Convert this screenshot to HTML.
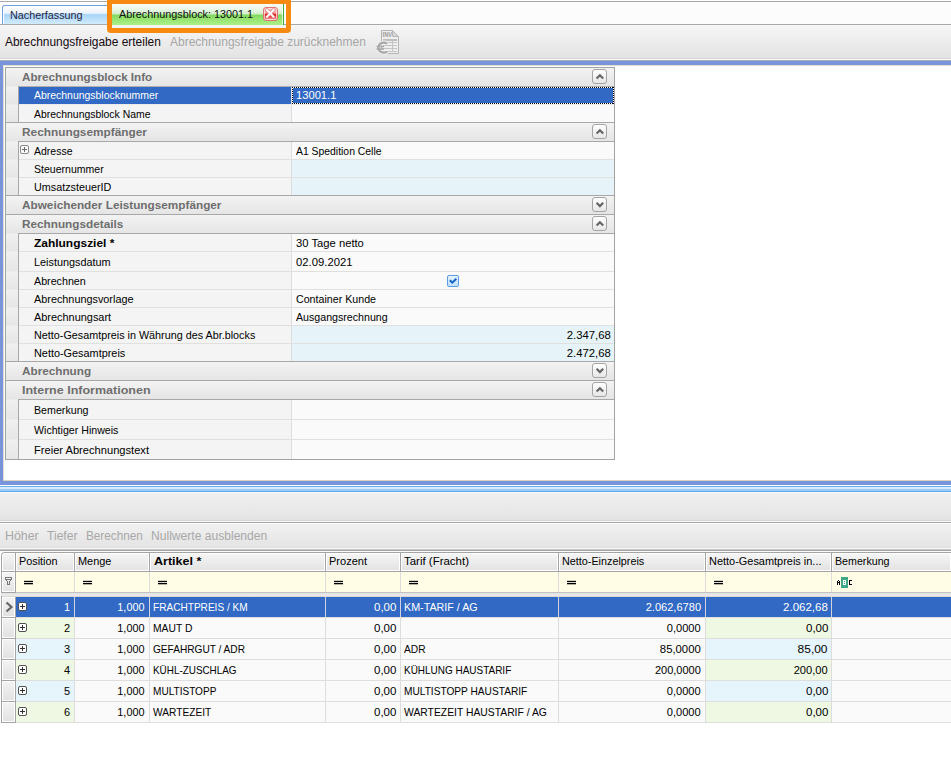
<!DOCTYPE html>
<html><head><meta charset="utf-8"><style>
html,body{margin:0;padding:0}
body{width:951px;height:766px;position:relative;overflow:hidden;background:#fff;font-family:"Liberation Sans",sans-serif}
.a{position:absolute}
.t{white-space:nowrap}
</style></head><body>
<div class="a" style="left:0px;top:1px;width:951px;height:1px;background:#a9a9a9"></div>
<div class="a" style="left:0px;top:2px;width:951px;height:22px;background:#fcfcfc"></div>
<div class="a" style="left:0px;top:24px;width:951px;height:1px;background:#a9a9a9"></div>
<div class="a" style="left:2px;top:5px;width:109px;height:19px;box-sizing:border-box;border:1px solid #6fa0e0;border-bottom:none;border-radius:3px 3px 0 0;box-shadow:inset 1px 1px 0 #fff;background:linear-gradient(to bottom,#ffffff 0%,#eaf3fd 40%,#a8d4f8 48%,#c2e2fb 80%,#d2ecfd 100%)"></div>
<div class="a t" style="left:10px;top:8.19px;line-height:14px;font-size:11px;color:#26263e;font-weight:normal;transform:scaleX(0.9809);transform-origin:left center;">Nacherfassung</div>
<div class="a" style="left:112px;top:4px;width:172px;height:21px;box-sizing:border-box;border-right:1px solid #3cac3c;background:linear-gradient(to bottom,#f8fcf6 0%,#e6f5e2 30%,#d2eeca 47%,#80d95e 53%,#8fe06a 65%,#a4ec80 90%,#acf088 100%)"></div>
<div class="a" style="left:112px;top:25px;width:174px;height:3px;background:#f4f4f4"></div>
<div class="a t" style="left:119px;top:7.19px;line-height:14px;font-size:11px;color:#101010;font-weight:normal;transform:scaleX(0.9829);transform-origin:left center;">Abrechnungsblock: 13001.1</div>
<div class="a" style="left:263px;top:7px;width:15px;height:14px;box-sizing:border-box;border:1px solid #e07272;border-radius:3px;box-shadow:inset 0 0 0 1px rgba(255,235,235,0.75);background:linear-gradient(to bottom,#fbd2d2 0%,#f6a4a4 42%,#e61c1c 55%,#ec4444 72%,#f9b8b8 100%)"><svg width="13" height="12" style="position:absolute;left:0;top:0"><path d="M3 2 L9.5 8.8 M9.5 2 L3 8.8" stroke="#d84848" stroke-width="3.6" stroke-linecap="square" opacity="0.55"/><path d="M3 2 L9.5 8.8 M9.5 2 L3 8.8" stroke="#fff" stroke-width="2.1" stroke-linecap="square"/></svg></div>
<div class="a" style="left:282px;top:5px;width:1px;height:19px;background:rgba(255,255,255,0.7)"></div>
<div class="a" style="left:0px;top:25px;width:951px;height:33px;background:linear-gradient(to bottom,#f6f6f6,#e3e3e3)"></div>
<div class="a" style="left:112px;top:25px;width:174px;height:3px;background:#f4f4f4"></div>
<div class="a" style="left:0px;top:58px;width:951px;height:1px;background:#d4d4d4"></div>
<div class="a" style="left:0px;top:59px;width:951px;height:1px;background:#fafafa"></div>
<div class="a" style="left:0px;top:60px;width:951px;height:1px;background:#a8acbc"></div>
<div class="a t" style="left:5px;top:34.84px;line-height:14px;font-size:12px;color:#140a10;font-weight:normal;transform:scaleX(0.9938);transform-origin:left center;">Abrechnungsfreigabe erteilen</div>
<div class="a t" style="left:170px;top:34.84px;line-height:14px;font-size:12px;color:#a6a6a6;font-weight:normal;transform:scaleX(0.9983);transform-origin:left center;">Abrechnungsfreigabe zurücknehmen</div>
<svg class="a" style="left:370px;top:26px" width="36" height="32" viewBox="0 0 36 32">
<path d="M11.5 4.5 H22.5 L28.5 10.5 V27.5 H11.5 Z" fill="#efefef" stroke="#b4b4b4" stroke-width="1"/>
<path d="M22.5 4.5 V10.5 H28.5 Z" fill="#d6d6d6" stroke="#b8b8b8" stroke-width="1"/>
<text x="12.6" y="11.2" font-family="Liberation Sans" font-size="7" font-weight="bold" fill="#989898" textLength="9.6" lengthAdjust="spacingAndGlyphs">INV</text>
<rect x="13" y="13" width="14" height="2" fill="#bdbdbd"/>
<path d="M13 16.5 H27 M13 19.5 H27 M13 22.5 H27 M13 25.5 H27 M22.5 13 V26" stroke="#c4c4c4" stroke-width="1"/>
<path d="M17.2 17.6 C14.5 15.8 9 16.2 8.3 21.6 C8.2 26 13.2 27.6 17.2 25.8" fill="none" stroke="#f4f4f4" stroke-width="4"/>
<path d="M17.2 17.6 C14.5 15.8 9 16.2 8.3 21.6 C8.2 26 13.2 27.6 17.2 25.8" fill="none" stroke="#a8a8a8" stroke-width="2.2"/>
<path d="M6.5 20.5 H14 M6.5 23 H14" stroke="#a8a8a8" stroke-width="1.3"/>
</svg>
<div class="a" style="left:107px;top:-1px;width:184px;height:34px;box-sizing:border-box;border:5px solid #f88a12;border-radius:1px 1px 4px 4px"></div>
<div class="a" style="left:0px;top:61px;width:951px;height:4px;background:#7895dc"></div>
<div class="a" style="left:0px;top:61px;width:3px;height:424px;background:#7895dc"></div>
<div class="a" style="left:0px;top:481px;width:951px;height:4px;background:#7895dc"></div>
<div class="a" style="left:3px;top:65px;width:948px;height:416px;background:#ffffff"></div>
<div class="a" style="left:3px;top:65px;width:948px;height:1px;background:#e2ddd2"></div>
<div class="a" style="left:3px;top:65px;width:1px;height:416px;background:#e2ddd2"></div>
<div class="a" style="left:3px;top:480px;width:948px;height:1px;background:#d8d2c4"></div>
<div class="a" style="left:5px;top:67px;width:610px;height:393px;box-sizing:border-box;border:1px solid #a3a3a3;background:#f4f4f4"></div>
<div class="a" style="left:6px;top:68px;width:608px;height:18px;background:linear-gradient(to bottom,#f3f3f3,#e5e5e5)"></div>
<div class="a t" style="left:22px;top:70.19px;line-height:14px;font-size:11px;color:#6e6e6e;font-weight:bold;transform:scaleX(1.0601);transform-origin:left center;">Abrechnungsblock Info</div>
<div class="a" style="left:592px;top:69px;width:15px;height:15px;box-sizing:border-box;border:1px solid #a4a4a4;border-radius:3px;background:linear-gradient(to bottom,#ffffff,#e6e6e6)"><svg width="13" height="13" style="position:absolute;left:0;top:0"><path d="M3.6 8.5 L6.9 5.2 L10.2 8.5" fill="none" stroke="#666" stroke-width="2.2"/></svg></div>
<div class="a" style="left:18px;top:86px;width:596px;height:1px;background:#b0b0b0"></div>
<div class="a" style="left:6px;top:86px;width:12px;height:1px;background:linear-gradient(to bottom,#f0f0f0,#e6e6e6)"></div>
<div class="a" style="left:18px;top:86px;width:1px;height:1px;background:#a8a8a8"></div>
<div class="a" style="left:6px;top:87px;width:12px;height:17px;background:linear-gradient(to bottom,#f0f0f0,#e6e6e6)"></div>
<div class="a" style="left:18px;top:87px;width:1px;height:17px;background:#a8a8a8"></div>
<div class="a" style="left:19px;top:87px;width:272px;height:17px;background:#3169c4"></div>
<div class="a" style="left:291px;top:87px;width:1px;height:17px;background:#dcdcdc"></div>
<div class="a" style="left:292px;top:87px;width:322px;height:17px;background:#3169c4"></div>
<div class="a" style="left:292px;top:87px;width:322px;height:1px;background:repeating-linear-gradient(to right,#000 0 1px,#fff 1px 2px)"></div>
<div class="a" style="left:292px;top:103px;width:322px;height:1px;background:repeating-linear-gradient(to right,#000 0 1px,#fff 1px 2px)"></div>
<div class="a" style="left:292px;top:87px;width:1px;height:17px;background:repeating-linear-gradient(to bottom,#000 0 1px,#fff 1px 2px)"></div>
<div class="a" style="left:613px;top:87px;width:1px;height:17px;background:repeating-linear-gradient(to bottom,#000 0 1px,#fff 1px 2px)"></div>
<div class="a t" style="left:34px;top:88.19px;line-height:14px;font-size:11px;color:#ffffff;font-weight:normal;transform:scaleX(0.9491);transform-origin:left center;">Abrechnungsblocknummer</div>
<div class="a t" style="left:296px;top:88.19px;line-height:14px;font-size:11px;color:#ffffff;font-weight:normal;transform:scaleX(1.0159);transform-origin:left center;">13001.1</div>
<div class="a" style="left:6px;top:104px;width:12px;height:1px;background:linear-gradient(to bottom,#f0f0f0,#e6e6e6)"></div>
<div class="a" style="left:18px;top:104px;width:1px;height:1px;background:#a8a8a8"></div>
<div class="a" style="left:19px;top:104px;width:595px;height:1px;background:#eeeae6"></div>
<div class="a" style="left:6px;top:105px;width:12px;height:17px;background:linear-gradient(to bottom,#f0f0f0,#e6e6e6)"></div>
<div class="a" style="left:18px;top:105px;width:1px;height:17px;background:#a8a8a8"></div>
<div class="a" style="left:19px;top:105px;width:272px;height:17px;background:#f4f4f4"></div>
<div class="a" style="left:291px;top:105px;width:1px;height:17px;background:#dcdcdc"></div>
<div class="a" style="left:292px;top:105px;width:322px;height:17px;background:#fafafa"></div>
<div class="a t" style="left:34px;top:106.69px;line-height:14px;font-size:11px;color:#000;font-weight:normal;transform:scaleX(0.9477);transform-origin:left center;">Abrechnungsblock Name</div>
<div class="a" style="left:6px;top:122px;width:608px;height:1px;background:#a8a8a8"></div>
<div class="a" style="left:6px;top:123px;width:608px;height:18px;background:linear-gradient(to bottom,#f3f3f3,#e5e5e5)"></div>
<div class="a t" style="left:22px;top:125.19px;line-height:14px;font-size:11px;color:#6e6e6e;font-weight:bold;transform:scaleX(1.0762);transform-origin:left center;">Rechnungsempfänger</div>
<div class="a" style="left:592px;top:124px;width:15px;height:15px;box-sizing:border-box;border:1px solid #a4a4a4;border-radius:3px;background:linear-gradient(to bottom,#ffffff,#e6e6e6)"><svg width="13" height="13" style="position:absolute;left:0;top:0"><path d="M3.6 8.5 L6.9 5.2 L10.2 8.5" fill="none" stroke="#666" stroke-width="2.2"/></svg></div>
<div class="a" style="left:18px;top:141px;width:596px;height:1px;background:#a8a8a8"></div>
<div class="a" style="left:6px;top:141px;width:12px;height:1px;background:linear-gradient(to bottom,#f0f0f0,#e6e6e6)"></div>
<div class="a" style="left:18px;top:141px;width:1px;height:1px;background:#a8a8a8"></div>
<div class="a" style="left:6px;top:142px;width:12px;height:17px;background:linear-gradient(to bottom,#f0f0f0,#e6e6e6)"></div>
<div class="a" style="left:18px;top:142px;width:1px;height:17px;background:#a8a8a8"></div>
<div class="a" style="left:19px;top:142px;width:272px;height:17px;background:#f4f4f4"></div>
<div class="a" style="left:291px;top:142px;width:1px;height:17px;background:#dcdcdc"></div>
<div class="a" style="left:292px;top:142px;width:322px;height:17px;background:#fafafa"></div>
<div class="a t" style="left:34px;top:143.69px;line-height:14px;font-size:11px;color:#000;font-weight:normal;transform:scaleX(0.9536);transform-origin:left center;">Adresse</div>
<div class="a t" style="left:296px;top:143.69px;line-height:14px;font-size:11px;color:#000;font-weight:normal;transform:scaleX(0.9444);transform-origin:left center;">A1 Spedition Celle</div>
<div class="a" style="left:20px;top:145px;width:9px;height:9px;box-sizing:border-box;border:1px solid #8a8a8a;border-radius:2px;background:#fafafa"><div class="a" style="left:1px;top:3px;width:5px;height:1px;background:#6a6a6a"></div><div class="a" style="left:3px;top:1px;width:1px;height:5px;background:#6a6a6a"></div></div>
<div class="a" style="left:6px;top:159px;width:12px;height:1px;background:linear-gradient(to bottom,#f0f0f0,#e6e6e6)"></div>
<div class="a" style="left:18px;top:159px;width:1px;height:1px;background:#a8a8a8"></div>
<div class="a" style="left:19px;top:159px;width:595px;height:1px;background:#e0e0e0"></div>
<div class="a" style="left:6px;top:160px;width:12px;height:17px;background:linear-gradient(to bottom,#f0f0f0,#e6e6e6)"></div>
<div class="a" style="left:18px;top:160px;width:1px;height:17px;background:#a8a8a8"></div>
<div class="a" style="left:19px;top:160px;width:272px;height:17px;background:#f4f4f4"></div>
<div class="a" style="left:291px;top:160px;width:1px;height:17px;background:#dcdcdc"></div>
<div class="a" style="left:292px;top:160px;width:322px;height:17px;background:#e6f4fa"></div>
<div class="a t" style="left:34px;top:161.69px;line-height:14px;font-size:11px;color:#000;font-weight:normal;transform:scaleX(0.9573);transform-origin:left center;">Steuernummer</div>
<div class="a" style="left:6px;top:177px;width:12px;height:1px;background:linear-gradient(to bottom,#f0f0f0,#e6e6e6)"></div>
<div class="a" style="left:18px;top:177px;width:1px;height:1px;background:#a8a8a8"></div>
<div class="a" style="left:19px;top:177px;width:595px;height:1px;background:#e0e0e0"></div>
<div class="a" style="left:6px;top:178px;width:12px;height:17px;background:linear-gradient(to bottom,#f0f0f0,#e6e6e6)"></div>
<div class="a" style="left:18px;top:178px;width:1px;height:17px;background:#a8a8a8"></div>
<div class="a" style="left:19px;top:178px;width:272px;height:17px;background:#f4f4f4"></div>
<div class="a" style="left:291px;top:178px;width:1px;height:17px;background:#dcdcdc"></div>
<div class="a" style="left:292px;top:178px;width:322px;height:17px;background:#e6f4fa"></div>
<div class="a t" style="left:34px;top:179.69px;line-height:14px;font-size:11px;color:#000;font-weight:normal;transform:scaleX(0.9807);transform-origin:left center;">UmsatzsteuerID</div>
<div class="a" style="left:6px;top:195px;width:608px;height:1px;background:#a8a8a8"></div>
<div class="a" style="left:6px;top:196px;width:608px;height:18px;background:linear-gradient(to bottom,#f3f3f3,#e5e5e5)"></div>
<div class="a t" style="left:22px;top:198.19px;line-height:14px;font-size:11px;color:#6e6e6e;font-weight:bold;transform:scaleX(1.0698);transform-origin:left center;">Abweichender Leistungsempfänger</div>
<div class="a" style="left:592px;top:197px;width:15px;height:15px;box-sizing:border-box;border:1px solid #a4a4a4;border-radius:3px;background:linear-gradient(to bottom,#ffffff,#e6e6e6)"><svg width="13" height="13" style="position:absolute;left:0;top:0"><path d="M3.6 4.8 L6.9 8.1 L10.2 4.8" fill="none" stroke="#666" stroke-width="2.2"/></svg></div>
<div class="a" style="left:6px;top:214px;width:608px;height:1px;background:#a8a8a8"></div>
<div class="a" style="left:6px;top:215px;width:608px;height:18px;background:linear-gradient(to bottom,#f3f3f3,#e5e5e5)"></div>
<div class="a t" style="left:22px;top:217.19px;line-height:14px;font-size:11px;color:#6e6e6e;font-weight:bold;transform:scaleX(1.0689);transform-origin:left center;">Rechnungsdetails</div>
<div class="a" style="left:592px;top:216px;width:15px;height:15px;box-sizing:border-box;border:1px solid #a4a4a4;border-radius:3px;background:linear-gradient(to bottom,#ffffff,#e6e6e6)"><svg width="13" height="13" style="position:absolute;left:0;top:0"><path d="M3.6 8.5 L6.9 5.2 L10.2 8.5" fill="none" stroke="#666" stroke-width="2.2"/></svg></div>
<div class="a" style="left:18px;top:233px;width:596px;height:1px;background:#a8a8a8"></div>
<div class="a" style="left:6px;top:233px;width:12px;height:1px;background:linear-gradient(to bottom,#f0f0f0,#e6e6e6)"></div>
<div class="a" style="left:18px;top:233px;width:1px;height:1px;background:#a8a8a8"></div>
<div class="a" style="left:6px;top:234px;width:12px;height:17px;background:linear-gradient(to bottom,#f0f0f0,#e6e6e6)"></div>
<div class="a" style="left:18px;top:234px;width:1px;height:17px;background:#a8a8a8"></div>
<div class="a" style="left:19px;top:234px;width:272px;height:17px;background:#f4f4f4"></div>
<div class="a" style="left:291px;top:234px;width:1px;height:17px;background:#dcdcdc"></div>
<div class="a" style="left:292px;top:234px;width:322px;height:17px;background:#fafafa"></div>
<div class="a t" style="left:34px;top:235.69px;line-height:14px;font-size:11px;color:#000;font-weight:bold;transform:scaleX(1.0867);transform-origin:left center;">Zahlungsziel *</div>
<div class="a t" style="left:296px;top:235.69px;line-height:14px;font-size:11px;color:#000;font-weight:normal;transform:scaleX(1.0211);transform-origin:left center;">30 Tage netto</div>
<div class="a" style="left:6px;top:251px;width:12px;height:1px;background:linear-gradient(to bottom,#f0f0f0,#e6e6e6)"></div>
<div class="a" style="left:18px;top:251px;width:1px;height:1px;background:#a8a8a8"></div>
<div class="a" style="left:19px;top:251px;width:595px;height:1px;background:#e0e0e0"></div>
<div class="a" style="left:6px;top:252px;width:12px;height:19px;background:linear-gradient(to bottom,#f0f0f0,#e6e6e6)"></div>
<div class="a" style="left:18px;top:252px;width:1px;height:19px;background:#a8a8a8"></div>
<div class="a" style="left:19px;top:252px;width:272px;height:19px;background:#f4f4f4"></div>
<div class="a" style="left:291px;top:252px;width:1px;height:19px;background:#dcdcdc"></div>
<div class="a" style="left:292px;top:252px;width:322px;height:19px;background:#fafafa"></div>
<div class="a t" style="left:34px;top:254.69px;line-height:14px;font-size:11px;color:#000;font-weight:normal;transform:scaleX(0.9864);transform-origin:left center;">Leistungsdatum</div>
<div class="a t" style="left:296px;top:254.69px;line-height:14px;font-size:11px;color:#000;font-weight:normal;transform:scaleX(1.0260);transform-origin:left center;">02.09.2021</div>
<div class="a" style="left:6px;top:271px;width:12px;height:1px;background:linear-gradient(to bottom,#f0f0f0,#e6e6e6)"></div>
<div class="a" style="left:18px;top:271px;width:1px;height:1px;background:#a8a8a8"></div>
<div class="a" style="left:19px;top:271px;width:595px;height:1px;background:#e0e0e0"></div>
<div class="a" style="left:6px;top:272px;width:12px;height:17px;background:linear-gradient(to bottom,#f0f0f0,#e6e6e6)"></div>
<div class="a" style="left:18px;top:272px;width:1px;height:17px;background:#a8a8a8"></div>
<div class="a" style="left:19px;top:272px;width:272px;height:17px;background:#f4f4f4"></div>
<div class="a" style="left:291px;top:272px;width:1px;height:17px;background:#dcdcdc"></div>
<div class="a" style="left:292px;top:272px;width:322px;height:17px;background:#fafafa"></div>
<div class="a t" style="left:34px;top:273.69px;line-height:14px;font-size:11px;color:#000;font-weight:normal;transform:scaleX(0.9720);transform-origin:left center;">Abrechnen</div>
<div class="a" style="left:447px;top:275px;width:12px;height:12px;box-sizing:border-box;border:1px solid #5a9ae6;border-radius:2px;background:linear-gradient(to bottom,#e6f3fd,#bfe2fb)"><svg width="10" height="10" style="position:absolute;left:0;top:0"><path d="M1.8 4.2 L4.3 6.7 L8.3 2.7" fill="none" stroke="#1464c8" stroke-width="2"/></svg></div>
<div class="a" style="left:6px;top:289px;width:12px;height:1px;background:linear-gradient(to bottom,#f0f0f0,#e6e6e6)"></div>
<div class="a" style="left:18px;top:289px;width:1px;height:1px;background:#a8a8a8"></div>
<div class="a" style="left:19px;top:289px;width:595px;height:1px;background:#e0e0e0"></div>
<div class="a" style="left:6px;top:290px;width:12px;height:17px;background:linear-gradient(to bottom,#f0f0f0,#e6e6e6)"></div>
<div class="a" style="left:18px;top:290px;width:1px;height:17px;background:#a8a8a8"></div>
<div class="a" style="left:19px;top:290px;width:272px;height:17px;background:#f4f4f4"></div>
<div class="a" style="left:291px;top:290px;width:1px;height:17px;background:#dcdcdc"></div>
<div class="a" style="left:292px;top:290px;width:322px;height:17px;background:#fafafa"></div>
<div class="a t" style="left:34px;top:291.69px;line-height:14px;font-size:11px;color:#000;font-weight:normal;transform:scaleX(0.9860);transform-origin:left center;">Abrechnungsvorlage</div>
<div class="a t" style="left:296px;top:291.69px;line-height:14px;font-size:11px;color:#000;font-weight:normal;transform:scaleX(0.9689);transform-origin:left center;">Container Kunde</div>
<div class="a" style="left:6px;top:307px;width:12px;height:1px;background:linear-gradient(to bottom,#f0f0f0,#e6e6e6)"></div>
<div class="a" style="left:18px;top:307px;width:1px;height:1px;background:#a8a8a8"></div>
<div class="a" style="left:19px;top:307px;width:595px;height:1px;background:#e0e0e0"></div>
<div class="a" style="left:6px;top:308px;width:12px;height:17px;background:linear-gradient(to bottom,#f0f0f0,#e6e6e6)"></div>
<div class="a" style="left:18px;top:308px;width:1px;height:17px;background:#a8a8a8"></div>
<div class="a" style="left:19px;top:308px;width:272px;height:17px;background:#f4f4f4"></div>
<div class="a" style="left:291px;top:308px;width:1px;height:17px;background:#dcdcdc"></div>
<div class="a" style="left:292px;top:308px;width:322px;height:17px;background:#fafafa"></div>
<div class="a t" style="left:34px;top:309.69px;line-height:14px;font-size:11px;color:#000;font-weight:normal;transform:scaleX(0.9929);transform-origin:left center;">Abrechnungsart</div>
<div class="a t" style="left:296px;top:309.69px;line-height:14px;font-size:11px;color:#000;font-weight:normal;transform:scaleX(0.9673);transform-origin:left center;">Ausgangsrechnung</div>
<div class="a" style="left:6px;top:325px;width:12px;height:1px;background:linear-gradient(to bottom,#f0f0f0,#e6e6e6)"></div>
<div class="a" style="left:18px;top:325px;width:1px;height:1px;background:#a8a8a8"></div>
<div class="a" style="left:19px;top:325px;width:595px;height:1px;background:#e0e0e0"></div>
<div class="a" style="left:6px;top:326px;width:12px;height:17px;background:linear-gradient(to bottom,#f0f0f0,#e6e6e6)"></div>
<div class="a" style="left:18px;top:326px;width:1px;height:17px;background:#a8a8a8"></div>
<div class="a" style="left:19px;top:326px;width:272px;height:17px;background:#f4f4f4"></div>
<div class="a" style="left:291px;top:326px;width:1px;height:17px;background:#dcdcdc"></div>
<div class="a" style="left:292px;top:326px;width:322px;height:17px;background:#e6f4fa"></div>
<div class="a t" style="left:34px;top:327.69px;line-height:14px;font-size:11px;color:#000;font-weight:normal;transform:scaleX(0.9808);transform-origin:left center;">Netto-Gesamtpreis in Währung des Abr.blocks</div>
<div class="a t" style="right:340px;top:327.69px;line-height:14px;font-size:11px;color:#000;font-weight:normal;text-align:right;transform:scaleX(1.0287);transform-origin:right center;">2.347,68</div>
<div class="a" style="left:6px;top:343px;width:12px;height:1px;background:linear-gradient(to bottom,#f0f0f0,#e6e6e6)"></div>
<div class="a" style="left:18px;top:343px;width:1px;height:1px;background:#a8a8a8"></div>
<div class="a" style="left:19px;top:343px;width:595px;height:1px;background:#e0e0e0"></div>
<div class="a" style="left:6px;top:344px;width:12px;height:17px;background:linear-gradient(to bottom,#f0f0f0,#e6e6e6)"></div>
<div class="a" style="left:18px;top:344px;width:1px;height:17px;background:#a8a8a8"></div>
<div class="a" style="left:19px;top:344px;width:272px;height:17px;background:#f4f4f4"></div>
<div class="a" style="left:291px;top:344px;width:1px;height:17px;background:#dcdcdc"></div>
<div class="a" style="left:292px;top:344px;width:322px;height:17px;background:#e6f4fa"></div>
<div class="a t" style="left:34px;top:345.69px;line-height:14px;font-size:11px;color:#000;font-weight:normal;transform:scaleX(0.9887);transform-origin:left center;">Netto-Gesamtpreis</div>
<div class="a t" style="right:340px;top:345.69px;line-height:14px;font-size:11px;color:#000;font-weight:normal;text-align:right;transform:scaleX(1.0287);transform-origin:right center;">2.472,68</div>
<div class="a" style="left:6px;top:361px;width:608px;height:1px;background:#a8a8a8"></div>
<div class="a" style="left:6px;top:362px;width:608px;height:18px;background:linear-gradient(to bottom,#f3f3f3,#e5e5e5)"></div>
<div class="a t" style="left:22px;top:364.19px;line-height:14px;font-size:11px;color:#6e6e6e;font-weight:bold;transform:scaleX(1.0663);transform-origin:left center;">Abrechnung</div>
<div class="a" style="left:592px;top:363px;width:15px;height:15px;box-sizing:border-box;border:1px solid #a4a4a4;border-radius:3px;background:linear-gradient(to bottom,#ffffff,#e6e6e6)"><svg width="13" height="13" style="position:absolute;left:0;top:0"><path d="M3.6 4.8 L6.9 8.1 L10.2 4.8" fill="none" stroke="#666" stroke-width="2.2"/></svg></div>
<div class="a" style="left:6px;top:380px;width:608px;height:1px;background:#a8a8a8"></div>
<div class="a" style="left:6px;top:381px;width:608px;height:18px;background:linear-gradient(to bottom,#f3f3f3,#e5e5e5)"></div>
<div class="a t" style="left:22px;top:383.19px;line-height:14px;font-size:11px;color:#6e6e6e;font-weight:bold;transform:scaleX(1.1375);transform-origin:left center;">Interne Informationen</div>
<div class="a" style="left:592px;top:382px;width:15px;height:15px;box-sizing:border-box;border:1px solid #a4a4a4;border-radius:3px;background:linear-gradient(to bottom,#ffffff,#e6e6e6)"><svg width="13" height="13" style="position:absolute;left:0;top:0"><path d="M3.6 8.5 L6.9 5.2 L10.2 8.5" fill="none" stroke="#666" stroke-width="2.2"/></svg></div>
<div class="a" style="left:18px;top:399px;width:596px;height:1px;background:#a8a8a8"></div>
<div class="a" style="left:6px;top:399px;width:12px;height:1px;background:linear-gradient(to bottom,#f0f0f0,#e6e6e6)"></div>
<div class="a" style="left:18px;top:399px;width:1px;height:1px;background:#a8a8a8"></div>
<div class="a" style="left:6px;top:400px;width:12px;height:19px;background:linear-gradient(to bottom,#f0f0f0,#e6e6e6)"></div>
<div class="a" style="left:18px;top:400px;width:1px;height:19px;background:#a8a8a8"></div>
<div class="a" style="left:19px;top:400px;width:272px;height:19px;background:#f4f4f4"></div>
<div class="a" style="left:291px;top:400px;width:1px;height:19px;background:#dcdcdc"></div>
<div class="a" style="left:292px;top:400px;width:322px;height:19px;background:#fafafa"></div>
<div class="a t" style="left:34px;top:402.69px;line-height:14px;font-size:11px;color:#000;font-weight:normal;transform:scaleX(0.9699);transform-origin:left center;">Bemerkung</div>
<div class="a" style="left:6px;top:419px;width:12px;height:1px;background:linear-gradient(to bottom,#f0f0f0,#e6e6e6)"></div>
<div class="a" style="left:18px;top:419px;width:1px;height:1px;background:#a8a8a8"></div>
<div class="a" style="left:19px;top:419px;width:595px;height:1px;background:#e0e0e0"></div>
<div class="a" style="left:6px;top:420px;width:12px;height:19px;background:linear-gradient(to bottom,#f0f0f0,#e6e6e6)"></div>
<div class="a" style="left:18px;top:420px;width:1px;height:19px;background:#a8a8a8"></div>
<div class="a" style="left:19px;top:420px;width:272px;height:19px;background:#f4f4f4"></div>
<div class="a" style="left:291px;top:420px;width:1px;height:19px;background:#dcdcdc"></div>
<div class="a" style="left:292px;top:420px;width:322px;height:19px;background:#fafafa"></div>
<div class="a t" style="left:34px;top:422.69px;line-height:14px;font-size:11px;color:#000;font-weight:normal;transform:scaleX(0.9657);transform-origin:left center;">Wichtiger Hinweis</div>
<div class="a" style="left:6px;top:439px;width:12px;height:1px;background:linear-gradient(to bottom,#f0f0f0,#e6e6e6)"></div>
<div class="a" style="left:18px;top:439px;width:1px;height:1px;background:#a8a8a8"></div>
<div class="a" style="left:19px;top:439px;width:595px;height:1px;background:#e0e0e0"></div>
<div class="a" style="left:6px;top:440px;width:12px;height:19px;background:linear-gradient(to bottom,#f0f0f0,#e6e6e6)"></div>
<div class="a" style="left:18px;top:440px;width:1px;height:19px;background:#a8a8a8"></div>
<div class="a" style="left:19px;top:440px;width:272px;height:19px;background:#f4f4f4"></div>
<div class="a" style="left:291px;top:440px;width:1px;height:19px;background:#dcdcdc"></div>
<div class="a" style="left:292px;top:440px;width:322px;height:19px;background:#fafafa"></div>
<div class="a t" style="left:34px;top:442.69px;line-height:14px;font-size:11px;color:#000;font-weight:normal;transform:scaleX(1.0111);transform-origin:left center;">Freier Abrechnungstext</div>
<div class="a" style="left:0px;top:485px;width:951px;height:1px;background:#ffffff"></div>
<div class="a" style="left:0px;top:486px;width:951px;height:1px;background:#6aaeec"></div>
<div class="a" style="left:0px;top:487px;width:951px;height:2px;background:#d9ebfc"></div>
<div class="a" style="left:0px;top:489px;width:951px;height:2px;background:#98cbf8"></div>
<div class="a" style="left:0px;top:491px;width:951px;height:1px;background:#5eaaf0"></div>
<div class="a" style="left:0px;top:492px;width:951px;height:1px;background:#fafafa"></div>
<div class="a" style="left:0px;top:493px;width:951px;height:27px;background:linear-gradient(to bottom,#f0f0f0,#e4e4e4)"></div>
<div class="a" style="left:0px;top:520px;width:951px;height:1px;background:#d6d6d6"></div>
<div class="a" style="left:0px;top:521px;width:951px;height:1px;background:#f8f8f8"></div>
<div class="a" style="left:0px;top:522px;width:951px;height:1px;background:#a8a8a8"></div>
<div class="a" style="left:0px;top:523px;width:951px;height:1px;background:#ffffff"></div>
<div class="a" style="left:0px;top:524px;width:951px;height:23px;background:linear-gradient(to bottom,#f1f1f1,#e4e4e4)"></div>
<div class="a" style="left:0px;top:547px;width:951px;height:1px;background:#e0e0e0"></div>
<div class="a" style="left:0px;top:548px;width:951px;height:1px;background:#f8f8f8"></div>
<div class="a" style="left:0px;top:549px;width:951px;height:1px;background:#c4c4c4"></div>
<div class="a" style="left:0px;top:550px;width:951px;height:1px;background:#a6a6a6"></div>
<div class="a" style="left:0px;top:551px;width:951px;height:1px;background:#fafafa"></div>
<div class="a t" style="left:5px;top:528.84px;line-height:14px;font-size:12.0px;color:#a8a8a8;font-weight:normal;transform:scaleX(1.0317);transform-origin:left center;">Höher</div>
<div class="a t" style="left:47px;top:528.84px;line-height:14px;font-size:12.0px;color:#a8a8a8;font-weight:normal;transform:scaleX(1.0081);transform-origin:left center;">Tiefer</div>
<div class="a t" style="left:86px;top:528.84px;line-height:14px;font-size:12.0px;color:#a8a8a8;font-weight:normal;transform:scaleX(0.9773);transform-origin:left center;">Berechnen</div>
<div class="a t" style="left:151px;top:528.84px;line-height:14px;font-size:12.0px;color:#a8a8a8;font-weight:normal;transform:scaleX(1.0073);transform-origin:left center;">Nullwerte ausblenden</div>
<div class="a" style="left:0px;top:552px;width:951px;height:214px;background:#ffffff"></div>
<div class="a" style="left:1px;top:552px;width:960px;height:171px;box-sizing:border-box;border-top:1px solid #a4a4a4;border-left:1px solid #a4a4a4;border-top-left-radius:4px;background:#fff"></div>
<div class="a" style="left:2px;top:553px;width:13px;height:18px;box-sizing:border-box;border:1px solid #fff;border-top-left-radius:3px;background:linear-gradient(to bottom,#f5f5f5,#e3e3e3)"></div>
<div class="a" style="left:15px;top:553px;width:1px;height:19px;background:#a4a4a4"></div>
<div class="a" style="left:16px;top:553px;width:58px;height:18px;box-sizing:border-box;border:1px solid #fff;background:linear-gradient(to bottom,#f5f5f5,#e3e3e3)"></div>
<div class="a" style="left:74px;top:553px;width:1px;height:19px;background:#a4a4a4"></div>
<div class="a t" style="left:19px;top:554.19px;line-height:14px;font-size:11px;color:#000;font-weight:normal;transform:scaleX(0.9857);transform-origin:left center;">Position</div>
<div class="a" style="left:75px;top:553px;width:74px;height:18px;box-sizing:border-box;border:1px solid #fff;background:linear-gradient(to bottom,#f5f5f5,#e3e3e3)"></div>
<div class="a" style="left:149px;top:553px;width:1px;height:19px;background:#a4a4a4"></div>
<div class="a t" style="left:78px;top:554.19px;line-height:14px;font-size:11px;color:#000;font-weight:normal;transform:scaleX(0.9920);transform-origin:left center;">Menge</div>
<div class="a" style="left:150px;top:553px;width:175px;height:18px;box-sizing:border-box;border:1px solid #fff;background:linear-gradient(to bottom,#f5f5f5,#e3e3e3)"></div>
<div class="a" style="left:325px;top:553px;width:1px;height:19px;background:#a4a4a4"></div>
<div class="a t" style="left:154px;top:554.19px;line-height:14px;font-size:11px;color:#000;font-weight:bold;transform:scaleX(1.1386);transform-origin:left center;">Artikel *</div>
<div class="a" style="left:326px;top:553px;width:74px;height:18px;box-sizing:border-box;border:1px solid #fff;background:linear-gradient(to bottom,#f5f5f5,#e3e3e3)"></div>
<div class="a" style="left:400px;top:553px;width:1px;height:19px;background:#a4a4a4"></div>
<div class="a t" style="left:329px;top:554.19px;line-height:14px;font-size:11px;color:#000;font-weight:normal;transform:scaleX(1.0026);transform-origin:left center;">Prozent</div>
<div class="a" style="left:401px;top:553px;width:157px;height:18px;box-sizing:border-box;border:1px solid #fff;background:linear-gradient(to bottom,#f5f5f5,#e3e3e3)"></div>
<div class="a" style="left:558px;top:553px;width:1px;height:19px;background:#a4a4a4"></div>
<div class="a t" style="left:404px;top:554.19px;line-height:14px;font-size:11px;color:#000;font-weight:normal;transform:scaleX(1.0418);transform-origin:left center;">Tarif (Fracht)</div>
<div class="a" style="left:559px;top:553px;width:146px;height:18px;box-sizing:border-box;border:1px solid #fff;background:linear-gradient(to bottom,#f5f5f5,#e3e3e3)"></div>
<div class="a" style="left:705px;top:553px;width:1px;height:19px;background:#a4a4a4"></div>
<div class="a t" style="left:562px;top:554.19px;line-height:14px;font-size:11px;color:#000;font-weight:normal;transform:scaleX(0.9821);transform-origin:left center;">Netto-Einzelpreis</div>
<div class="a" style="left:706px;top:553px;width:125px;height:18px;box-sizing:border-box;border:1px solid #fff;background:linear-gradient(to bottom,#f5f5f5,#e3e3e3)"></div>
<div class="a" style="left:831px;top:553px;width:1px;height:19px;background:#a4a4a4"></div>
<div class="a t" style="left:709px;top:554.19px;line-height:14px;font-size:11px;color:#000;font-weight:normal;transform:scaleX(0.9945);transform-origin:left center;">Netto-Gesamtpreis in...</div>
<div class="a" style="left:832px;top:553px;width:119px;height:18px;box-sizing:border-box;border:1px solid #fff;background:linear-gradient(to bottom,#f5f5f5,#e3e3e3)"></div>
<div class="a t" style="left:835px;top:554.19px;line-height:14px;font-size:11px;color:#000;font-weight:normal;transform:scaleX(0.9699);transform-origin:left center;">Bemerkung</div>
<div class="a" style="left:1px;top:571px;width:950px;height:1px;background:#a4a4a4"></div>
<div class="a" style="left:2px;top:572px;width:13px;height:20px;box-sizing:border-box;border:1px solid #fff;background:linear-gradient(to bottom,#f5f5f5,#e3e3e3)"></div>
<div class="a" style="left:15px;top:572px;width:1px;height:20px;background:#a4a4a4"></div>
<div class="a" style="left:16px;top:572px;width:935px;height:20px;background:#fffde6"></div>
<div class="a" style="left:74px;top:572px;width:1px;height:20px;background:#dcdcdc"></div>
<div class="a" style="left:149px;top:572px;width:1px;height:20px;background:#dcdcdc"></div>
<div class="a" style="left:325px;top:572px;width:1px;height:20px;background:#dcdcdc"></div>
<div class="a" style="left:400px;top:572px;width:1px;height:20px;background:#dcdcdc"></div>
<div class="a" style="left:558px;top:572px;width:1px;height:20px;background:#dcdcdc"></div>
<div class="a" style="left:705px;top:572px;width:1px;height:20px;background:#dcdcdc"></div>
<div class="a" style="left:831px;top:572px;width:1px;height:20px;background:#dcdcdc"></div>
<div class="a" style="left:24px;top:580px;width:9px;height:1px;background:rgba(0,0,0,0.18)"></div>
<div class="a" style="left:24px;top:581px;width:9px;height:1px;background:#000"></div>
<div class="a" style="left:24px;top:582px;width:9px;height:1px;background:rgba(0,0,0,0.12)"></div>
<div class="a" style="left:24px;top:583px;width:9px;height:1px;background:#000"></div>
<div class="a" style="left:24px;top:584px;width:9px;height:1px;background:rgba(0,0,0,0.3)"></div>
<div class="a" style="left:83px;top:580px;width:9px;height:1px;background:rgba(0,0,0,0.18)"></div>
<div class="a" style="left:83px;top:581px;width:9px;height:1px;background:#000"></div>
<div class="a" style="left:83px;top:582px;width:9px;height:1px;background:rgba(0,0,0,0.12)"></div>
<div class="a" style="left:83px;top:583px;width:9px;height:1px;background:#000"></div>
<div class="a" style="left:83px;top:584px;width:9px;height:1px;background:rgba(0,0,0,0.3)"></div>
<div class="a" style="left:158px;top:580px;width:9px;height:1px;background:rgba(0,0,0,0.18)"></div>
<div class="a" style="left:158px;top:581px;width:9px;height:1px;background:#000"></div>
<div class="a" style="left:158px;top:582px;width:9px;height:1px;background:rgba(0,0,0,0.12)"></div>
<div class="a" style="left:158px;top:583px;width:9px;height:1px;background:#000"></div>
<div class="a" style="left:158px;top:584px;width:9px;height:1px;background:rgba(0,0,0,0.3)"></div>
<div class="a" style="left:334px;top:580px;width:9px;height:1px;background:rgba(0,0,0,0.18)"></div>
<div class="a" style="left:334px;top:581px;width:9px;height:1px;background:#000"></div>
<div class="a" style="left:334px;top:582px;width:9px;height:1px;background:rgba(0,0,0,0.12)"></div>
<div class="a" style="left:334px;top:583px;width:9px;height:1px;background:#000"></div>
<div class="a" style="left:334px;top:584px;width:9px;height:1px;background:rgba(0,0,0,0.3)"></div>
<div class="a" style="left:409px;top:580px;width:9px;height:1px;background:rgba(0,0,0,0.18)"></div>
<div class="a" style="left:409px;top:581px;width:9px;height:1px;background:#000"></div>
<div class="a" style="left:409px;top:582px;width:9px;height:1px;background:rgba(0,0,0,0.12)"></div>
<div class="a" style="left:409px;top:583px;width:9px;height:1px;background:#000"></div>
<div class="a" style="left:409px;top:584px;width:9px;height:1px;background:rgba(0,0,0,0.3)"></div>
<div class="a" style="left:567px;top:580px;width:9px;height:1px;background:rgba(0,0,0,0.18)"></div>
<div class="a" style="left:567px;top:581px;width:9px;height:1px;background:#000"></div>
<div class="a" style="left:567px;top:582px;width:9px;height:1px;background:rgba(0,0,0,0.12)"></div>
<div class="a" style="left:567px;top:583px;width:9px;height:1px;background:#000"></div>
<div class="a" style="left:567px;top:584px;width:9px;height:1px;background:rgba(0,0,0,0.3)"></div>
<div class="a" style="left:714px;top:580px;width:9px;height:1px;background:rgba(0,0,0,0.18)"></div>
<div class="a" style="left:714px;top:581px;width:9px;height:1px;background:#000"></div>
<div class="a" style="left:714px;top:582px;width:9px;height:1px;background:rgba(0,0,0,0.12)"></div>
<div class="a" style="left:714px;top:583px;width:9px;height:1px;background:#000"></div>
<div class="a" style="left:714px;top:584px;width:9px;height:1px;background:rgba(0,0,0,0.3)"></div>
<svg class="a" style="left:5px;top:577px" width="8" height="9" shape-rendering="crispEdges"><path d="M0 0H7V1H0Z M0 1H1V3H0Z M6 1H7V3H6Z M0 2H7V3H0Z M1 3H2V4H1Z M5 3H6V4H5Z M2 4H3V8H2Z M4 4H5V8H4Z M2 7H5V8H2Z" fill="#767676"/><path d="M1 1H6V2H1Z" fill="#f4f4f4"/></svg>
<div class="a" style="left:1px;top:592px;width:15px;height:1px;background:#a4a4a4"></div>
<div class="a" style="left:16px;top:592px;width:935px;height:1px;background:#c2c2c2"></div>
<div class="a" style="left:1px;top:593px;width:950px;height:3px;background:linear-gradient(to bottom,#e2e2e2,#ececec)"></div>
<div class="a" style="left:1px;top:596px;width:950px;height:1px;background:#dcd8d0"></div>
<div class="a" style="left:1px;top:596px;width:1px;height:22px;background:#a4a4a4"></div>
<div class="a" style="left:2px;top:597px;width:13px;height:20px;box-sizing:border-box;border:1px solid #fff;background:linear-gradient(to bottom,#f2f2f2,#e2e2e2)"></div>
<div class="a" style="left:15px;top:597px;width:1px;height:20px;background:#a4a4a4"></div>
<div class="a" style="left:1px;top:617px;width:15px;height:1px;background:#a4a4a4"></div>
<div class="a" style="left:16px;top:597px;width:935px;height:20px;background:#3169c4"></div>
<div class="a" style="left:74px;top:597px;width:1px;height:20px;background:#d0d4dc"></div>
<div class="a" style="left:149px;top:597px;width:1px;height:20px;background:#d0d4dc"></div>
<div class="a" style="left:325px;top:597px;width:1px;height:20px;background:#d0d4dc"></div>
<div class="a" style="left:400px;top:597px;width:1px;height:20px;background:#d0d4dc"></div>
<div class="a" style="left:558px;top:597px;width:1px;height:20px;background:#d0d4dc"></div>
<div class="a" style="left:705px;top:597px;width:1px;height:20px;background:#d0d4dc"></div>
<div class="a" style="left:831px;top:597px;width:1px;height:20px;background:#d0d4dc"></div>
<svg class="a" style="left:5px;top:601px" width="9" height="12"><path d="M1.5 1.5 L6.5 6 L1.5 10.5" fill="none" stroke="#666" stroke-width="2.2"/></svg>
<div class="a" style="left:16px;top:617px;width:935px;height:1px;background:#dedede"></div>
<div class="a" style="left:18px;top:602px;width:9px;height:9px;box-sizing:border-box;border:1px solid #505050;border-radius:2px;background:#fff"><div class="a" style="left:1px;top:3px;width:5px;height:1px;background:#303030"></div><div class="a" style="left:3px;top:1px;width:1px;height:5px;background:#303030"></div></div>
<div class="a t" style="right:881px;top:600.19px;line-height:14px;font-size:11px;color:#fff;font-weight:normal;text-align:right;">1</div>
<div class="a t" style="right:806px;top:600.19px;line-height:14px;font-size:11px;color:#fff;font-weight:normal;text-align:right;transform:scaleX(0.9890);transform-origin:right center;">1,000</div>
<div class="a t" style="left:153px;top:600.19px;line-height:14px;font-size:11px;color:#fff;font-weight:normal;transform:scaleX(0.9165);transform-origin:left center;">FRACHTPREIS / KM</div>
<div class="a t" style="right:555px;top:600.19px;line-height:14px;font-size:11px;color:#fff;font-weight:normal;text-align:right;transform:scaleX(1.0466);transform-origin:right center;">0,00</div>
<div class="a t" style="left:404px;top:600.19px;line-height:14px;font-size:11px;color:#fff;font-weight:normal;transform:scaleX(0.9751);transform-origin:left center;">KM-TARIF / AG</div>
<div class="a t" style="right:250px;top:600.19px;line-height:14px;font-size:11px;color:#fff;font-weight:normal;text-align:right;transform:scaleX(1.0057);transform-origin:right center;">2.062,6780</div>
<div class="a t" style="right:123px;top:600.19px;line-height:14px;font-size:11px;color:#fff;font-weight:normal;text-align:right;transform:scaleX(1.0455);transform-origin:right center;">2.062,68</div>
<div class="a" style="left:1px;top:617px;width:1px;height:22px;background:#a4a4a4"></div>
<div class="a" style="left:2px;top:618px;width:13px;height:20px;box-sizing:border-box;border:1px solid #fff;background:linear-gradient(to bottom,#f2f2f2,#e2e2e2)"></div>
<div class="a" style="left:15px;top:618px;width:1px;height:20px;background:#a4a4a4"></div>
<div class="a" style="left:1px;top:638px;width:15px;height:1px;background:#a4a4a4"></div>
<div class="a" style="left:16px;top:618px;width:58px;height:20px;background:#eef8e2"></div>
<div class="a" style="left:75px;top:618px;width:876px;height:20px;background:#fafafa"></div>
<div class="a" style="left:706px;top:618px;width:125px;height:20px;background:#eef8e2"></div>
<div class="a" style="left:74px;top:618px;width:1px;height:20px;background:#dcdcdc"></div>
<div class="a" style="left:149px;top:618px;width:1px;height:20px;background:#dcdcdc"></div>
<div class="a" style="left:325px;top:618px;width:1px;height:20px;background:#dcdcdc"></div>
<div class="a" style="left:400px;top:618px;width:1px;height:20px;background:#dcdcdc"></div>
<div class="a" style="left:558px;top:618px;width:1px;height:20px;background:#dcdcdc"></div>
<div class="a" style="left:705px;top:618px;width:1px;height:20px;background:#dcdcdc"></div>
<div class="a" style="left:831px;top:618px;width:1px;height:20px;background:#dcdcdc"></div>
<div class="a" style="left:16px;top:638px;width:935px;height:1px;background:#dedede"></div>
<div class="a" style="left:18px;top:623px;width:9px;height:9px;box-sizing:border-box;border:1px solid #505050;border-radius:2px;background:#fff"><div class="a" style="left:1px;top:3px;width:5px;height:1px;background:#303030"></div><div class="a" style="left:3px;top:1px;width:1px;height:5px;background:#303030"></div></div>
<div class="a t" style="right:881px;top:621.19px;line-height:14px;font-size:11px;color:#000;font-weight:normal;text-align:right;">2</div>
<div class="a t" style="right:806px;top:621.19px;line-height:14px;font-size:11px;color:#000;font-weight:normal;text-align:right;transform:scaleX(0.9890);transform-origin:right center;">1,000</div>
<div class="a t" style="left:153px;top:621.19px;line-height:14px;font-size:11px;color:#000;font-weight:normal;transform:scaleX(0.9375);transform-origin:left center;">MAUT D</div>
<div class="a t" style="right:555px;top:621.19px;line-height:14px;font-size:11px;color:#000;font-weight:normal;text-align:right;transform:scaleX(1.0466);transform-origin:right center;">0,00</div>
<div class="a t" style="left:404px;top:621.19px;line-height:14px;font-size:11px;color:#000;font-weight:normal;"></div>
<div class="a t" style="right:250px;top:621.19px;line-height:14px;font-size:11px;color:#000;font-weight:normal;text-align:right;transform:scaleX(1.0067);transform-origin:right center;">0,0000</div>
<div class="a t" style="right:123px;top:621.19px;line-height:14px;font-size:11px;color:#000;font-weight:normal;text-align:right;transform:scaleX(1.0466);transform-origin:right center;">0,00</div>
<div class="a" style="left:1px;top:638px;width:1px;height:22px;background:#a4a4a4"></div>
<div class="a" style="left:2px;top:639px;width:13px;height:20px;box-sizing:border-box;border:1px solid #fff;background:linear-gradient(to bottom,#f2f2f2,#e2e2e2)"></div>
<div class="a" style="left:15px;top:639px;width:1px;height:20px;background:#a4a4a4"></div>
<div class="a" style="left:1px;top:659px;width:15px;height:1px;background:#a4a4a4"></div>
<div class="a" style="left:16px;top:639px;width:58px;height:20px;background:#e6f4fb"></div>
<div class="a" style="left:75px;top:639px;width:876px;height:20px;background:#fafafa"></div>
<div class="a" style="left:706px;top:639px;width:125px;height:20px;background:#e6f4fb"></div>
<div class="a" style="left:74px;top:639px;width:1px;height:20px;background:#dcdcdc"></div>
<div class="a" style="left:149px;top:639px;width:1px;height:20px;background:#dcdcdc"></div>
<div class="a" style="left:325px;top:639px;width:1px;height:20px;background:#dcdcdc"></div>
<div class="a" style="left:400px;top:639px;width:1px;height:20px;background:#dcdcdc"></div>
<div class="a" style="left:558px;top:639px;width:1px;height:20px;background:#dcdcdc"></div>
<div class="a" style="left:705px;top:639px;width:1px;height:20px;background:#dcdcdc"></div>
<div class="a" style="left:831px;top:639px;width:1px;height:20px;background:#dcdcdc"></div>
<div class="a" style="left:16px;top:659px;width:935px;height:1px;background:#dedede"></div>
<div class="a" style="left:18px;top:644px;width:9px;height:9px;box-sizing:border-box;border:1px solid #505050;border-radius:2px;background:#fff"><div class="a" style="left:1px;top:3px;width:5px;height:1px;background:#303030"></div><div class="a" style="left:3px;top:1px;width:1px;height:5px;background:#303030"></div></div>
<div class="a t" style="right:881px;top:642.19px;line-height:14px;font-size:11px;color:#000;font-weight:normal;text-align:right;">3</div>
<div class="a t" style="right:806px;top:642.19px;line-height:14px;font-size:11px;color:#000;font-weight:normal;text-align:right;transform:scaleX(0.9890);transform-origin:right center;">1,000</div>
<div class="a t" style="left:153px;top:642.19px;line-height:14px;font-size:11px;color:#000;font-weight:normal;transform:scaleX(0.9194);transform-origin:left center;">GEFAHRGUT / ADR</div>
<div class="a t" style="right:555px;top:642.19px;line-height:14px;font-size:11px;color:#000;font-weight:normal;text-align:right;transform:scaleX(1.0466);transform-origin:right center;">0,00</div>
<div class="a t" style="left:404px;top:642.19px;line-height:14px;font-size:11px;color:#000;font-weight:normal;transform:scaleX(0.9256);transform-origin:left center;">ADR</div>
<div class="a t" style="right:250px;top:642.19px;line-height:14px;font-size:11px;color:#000;font-weight:normal;text-align:right;transform:scaleX(1.0294);transform-origin:right center;">85,0000</div>
<div class="a t" style="right:123px;top:642.19px;line-height:14px;font-size:11px;color:#000;font-weight:normal;text-align:right;transform:scaleX(1.0883);transform-origin:right center;">85,00</div>
<div class="a" style="left:1px;top:659px;width:1px;height:22px;background:#a4a4a4"></div>
<div class="a" style="left:2px;top:660px;width:13px;height:20px;box-sizing:border-box;border:1px solid #fff;background:linear-gradient(to bottom,#f2f2f2,#e2e2e2)"></div>
<div class="a" style="left:15px;top:660px;width:1px;height:20px;background:#a4a4a4"></div>
<div class="a" style="left:1px;top:680px;width:15px;height:1px;background:#a4a4a4"></div>
<div class="a" style="left:16px;top:660px;width:58px;height:20px;background:#eef8e2"></div>
<div class="a" style="left:75px;top:660px;width:876px;height:20px;background:#fafafa"></div>
<div class="a" style="left:706px;top:660px;width:125px;height:20px;background:#eef8e2"></div>
<div class="a" style="left:74px;top:660px;width:1px;height:20px;background:#dcdcdc"></div>
<div class="a" style="left:149px;top:660px;width:1px;height:20px;background:#dcdcdc"></div>
<div class="a" style="left:325px;top:660px;width:1px;height:20px;background:#dcdcdc"></div>
<div class="a" style="left:400px;top:660px;width:1px;height:20px;background:#dcdcdc"></div>
<div class="a" style="left:558px;top:660px;width:1px;height:20px;background:#dcdcdc"></div>
<div class="a" style="left:705px;top:660px;width:1px;height:20px;background:#dcdcdc"></div>
<div class="a" style="left:831px;top:660px;width:1px;height:20px;background:#dcdcdc"></div>
<div class="a" style="left:16px;top:680px;width:935px;height:1px;background:#dedede"></div>
<div class="a" style="left:18px;top:665px;width:9px;height:9px;box-sizing:border-box;border:1px solid #505050;border-radius:2px;background:#fff"><div class="a" style="left:1px;top:3px;width:5px;height:1px;background:#303030"></div><div class="a" style="left:3px;top:1px;width:1px;height:5px;background:#303030"></div></div>
<div class="a t" style="right:881px;top:663.19px;line-height:14px;font-size:11px;color:#000;font-weight:normal;text-align:right;">4</div>
<div class="a t" style="right:806px;top:663.19px;line-height:14px;font-size:11px;color:#000;font-weight:normal;text-align:right;transform:scaleX(0.9890);transform-origin:right center;">1,000</div>
<div class="a t" style="left:153px;top:663.19px;line-height:14px;font-size:11px;color:#000;font-weight:normal;transform:scaleX(0.8995);transform-origin:left center;">KÜHL-ZUSCHLAG</div>
<div class="a t" style="right:555px;top:663.19px;line-height:14px;font-size:11px;color:#000;font-weight:normal;text-align:right;transform:scaleX(1.0466);transform-origin:right center;">0,00</div>
<div class="a t" style="left:404px;top:663.19px;line-height:14px;font-size:11px;color:#000;font-weight:normal;transform:scaleX(0.9059);transform-origin:left center;">KÜHLUNG HAUSTARIF</div>
<div class="a t" style="right:250px;top:663.19px;line-height:14px;font-size:11px;color:#000;font-weight:normal;text-align:right;transform:scaleX(1.0021);transform-origin:right center;">200,0000</div>
<div class="a t" style="right:123px;top:663.19px;line-height:14px;font-size:11px;color:#000;font-weight:normal;text-align:right;transform:scaleX(1.0101);transform-origin:right center;">200,00</div>
<div class="a" style="left:1px;top:680px;width:1px;height:22px;background:#a4a4a4"></div>
<div class="a" style="left:2px;top:681px;width:13px;height:20px;box-sizing:border-box;border:1px solid #fff;background:linear-gradient(to bottom,#f2f2f2,#e2e2e2)"></div>
<div class="a" style="left:15px;top:681px;width:1px;height:20px;background:#a4a4a4"></div>
<div class="a" style="left:1px;top:701px;width:15px;height:1px;background:#a4a4a4"></div>
<div class="a" style="left:16px;top:681px;width:58px;height:20px;background:#e6f4fb"></div>
<div class="a" style="left:75px;top:681px;width:876px;height:20px;background:#fafafa"></div>
<div class="a" style="left:706px;top:681px;width:125px;height:20px;background:#e6f4fb"></div>
<div class="a" style="left:74px;top:681px;width:1px;height:20px;background:#dcdcdc"></div>
<div class="a" style="left:149px;top:681px;width:1px;height:20px;background:#dcdcdc"></div>
<div class="a" style="left:325px;top:681px;width:1px;height:20px;background:#dcdcdc"></div>
<div class="a" style="left:400px;top:681px;width:1px;height:20px;background:#dcdcdc"></div>
<div class="a" style="left:558px;top:681px;width:1px;height:20px;background:#dcdcdc"></div>
<div class="a" style="left:705px;top:681px;width:1px;height:20px;background:#dcdcdc"></div>
<div class="a" style="left:831px;top:681px;width:1px;height:20px;background:#dcdcdc"></div>
<div class="a" style="left:16px;top:701px;width:935px;height:1px;background:#dedede"></div>
<div class="a" style="left:18px;top:686px;width:9px;height:9px;box-sizing:border-box;border:1px solid #505050;border-radius:2px;background:#fff"><div class="a" style="left:1px;top:3px;width:5px;height:1px;background:#303030"></div><div class="a" style="left:3px;top:1px;width:1px;height:5px;background:#303030"></div></div>
<div class="a t" style="right:881px;top:684.19px;line-height:14px;font-size:11px;color:#000;font-weight:normal;text-align:right;">5</div>
<div class="a t" style="right:806px;top:684.19px;line-height:14px;font-size:11px;color:#000;font-weight:normal;text-align:right;transform:scaleX(0.9890);transform-origin:right center;">1,000</div>
<div class="a t" style="left:153px;top:684.19px;line-height:14px;font-size:11px;color:#000;font-weight:normal;transform:scaleX(0.9146);transform-origin:left center;">MULTISTOPP</div>
<div class="a t" style="right:555px;top:684.19px;line-height:14px;font-size:11px;color:#000;font-weight:normal;text-align:right;transform:scaleX(1.0466);transform-origin:right center;">0,00</div>
<div class="a t" style="left:404px;top:684.19px;line-height:14px;font-size:11px;color:#000;font-weight:normal;transform:scaleX(0.9221);transform-origin:left center;">MULTISTOPP HAUSTARIF</div>
<div class="a t" style="right:250px;top:684.19px;line-height:14px;font-size:11px;color:#000;font-weight:normal;text-align:right;transform:scaleX(1.0067);transform-origin:right center;">0,0000</div>
<div class="a t" style="right:123px;top:684.19px;line-height:14px;font-size:11px;color:#000;font-weight:normal;text-align:right;transform:scaleX(1.0466);transform-origin:right center;">0,00</div>
<div class="a" style="left:1px;top:701px;width:1px;height:22px;background:#a4a4a4"></div>
<div class="a" style="left:2px;top:702px;width:13px;height:20px;box-sizing:border-box;border:1px solid #fff;background:linear-gradient(to bottom,#f2f2f2,#e2e2e2)"></div>
<div class="a" style="left:15px;top:702px;width:1px;height:20px;background:#a4a4a4"></div>
<div class="a" style="left:1px;top:722px;width:15px;height:1px;background:#a4a4a4"></div>
<div class="a" style="left:16px;top:702px;width:58px;height:20px;background:#eef8e2"></div>
<div class="a" style="left:75px;top:702px;width:876px;height:20px;background:#fafafa"></div>
<div class="a" style="left:706px;top:702px;width:125px;height:20px;background:#eef8e2"></div>
<div class="a" style="left:74px;top:702px;width:1px;height:20px;background:#dcdcdc"></div>
<div class="a" style="left:149px;top:702px;width:1px;height:20px;background:#dcdcdc"></div>
<div class="a" style="left:325px;top:702px;width:1px;height:20px;background:#dcdcdc"></div>
<div class="a" style="left:400px;top:702px;width:1px;height:20px;background:#dcdcdc"></div>
<div class="a" style="left:558px;top:702px;width:1px;height:20px;background:#dcdcdc"></div>
<div class="a" style="left:705px;top:702px;width:1px;height:20px;background:#dcdcdc"></div>
<div class="a" style="left:831px;top:702px;width:1px;height:20px;background:#dcdcdc"></div>
<div class="a" style="left:16px;top:722px;width:935px;height:1px;background:#dedede"></div>
<div class="a" style="left:18px;top:707px;width:9px;height:9px;box-sizing:border-box;border:1px solid #505050;border-radius:2px;background:#fff"><div class="a" style="left:1px;top:3px;width:5px;height:1px;background:#303030"></div><div class="a" style="left:3px;top:1px;width:1px;height:5px;background:#303030"></div></div>
<div class="a t" style="right:881px;top:705.19px;line-height:14px;font-size:11px;color:#000;font-weight:normal;text-align:right;">6</div>
<div class="a t" style="right:806px;top:705.19px;line-height:14px;font-size:11px;color:#000;font-weight:normal;text-align:right;transform:scaleX(0.9890);transform-origin:right center;">1,000</div>
<div class="a t" style="left:153px;top:705.19px;line-height:14px;font-size:11px;color:#000;font-weight:normal;transform:scaleX(0.9259);transform-origin:left center;">WARTEZEIT</div>
<div class="a t" style="right:555px;top:705.19px;line-height:14px;font-size:11px;color:#000;font-weight:normal;text-align:right;transform:scaleX(1.0466);transform-origin:right center;">0,00</div>
<div class="a t" style="left:404px;top:705.19px;line-height:14px;font-size:11px;color:#000;font-weight:normal;transform:scaleX(0.9411);transform-origin:left center;">WARTEZEIT HAUSTARIF / AG</div>
<div class="a t" style="right:250px;top:705.19px;line-height:14px;font-size:11px;color:#000;font-weight:normal;text-align:right;transform:scaleX(1.0067);transform-origin:right center;">0,0000</div>
<div class="a t" style="right:123px;top:705.19px;line-height:14px;font-size:11px;color:#000;font-weight:normal;text-align:right;transform:scaleX(1.0466);transform-origin:right center;">0,00</div>
<svg class="a" style="left:837px;top:577px" width="16" height="11" shape-rendering="crispEdges"><path d="M1 3H2V4H1Z M0 4H1V8H0Z M2 4H3V8H2Z M0 5H3V6H0Z" fill="#000"/><rect x="4" y="0" width="7" height="11" fill="#40a886"/><rect x="6" y="3" width="3" height="5" fill="#f4fff8"/><rect x="7" y="4" width="1" height="1" fill="#40a886"/><rect x="7" y="6" width="1" height="1" fill="#40a886"/><path d="M12 3H15V4H12Z M12 4H13V7H12Z M12 7H15V8H12Z" fill="#000"/></svg>
</body></html>
